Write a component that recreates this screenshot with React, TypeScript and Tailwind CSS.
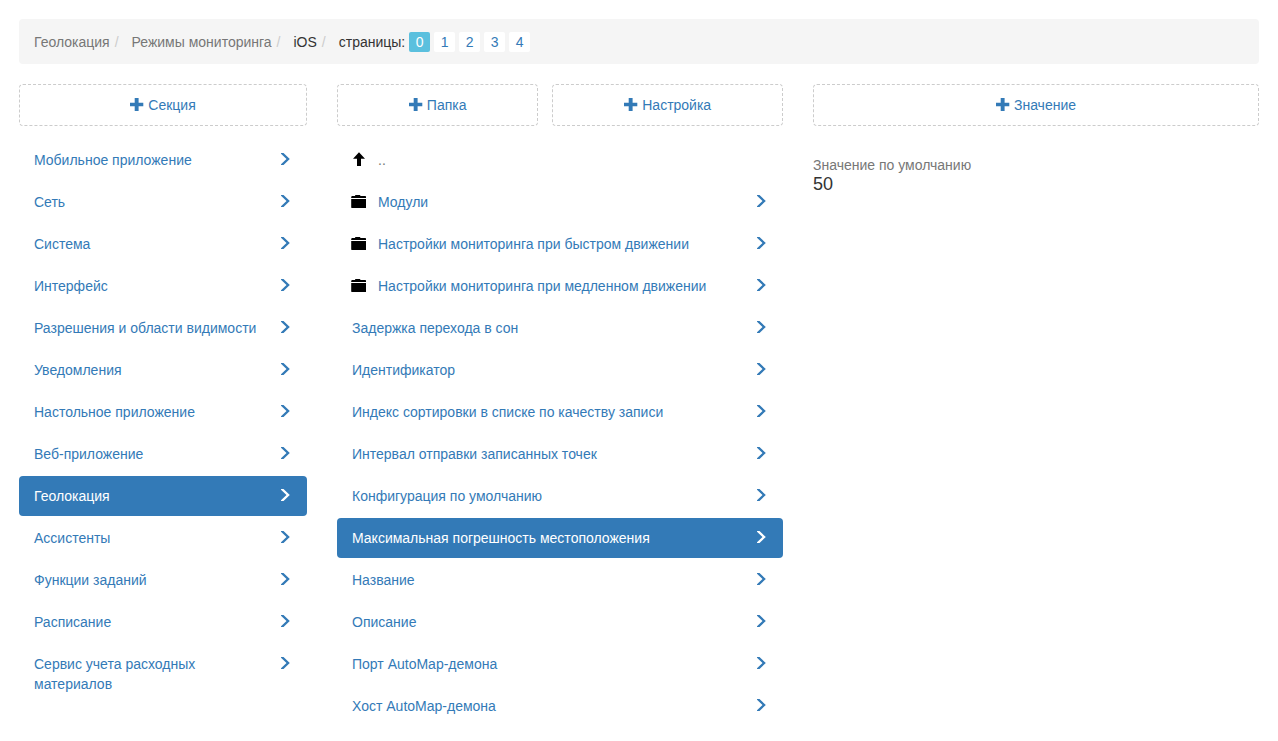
import React from "react";

type Kind = "up" | "folder" | "setting";

interface Entry {
  label: string;
  kind?: Kind;
  active?: boolean;
}

const sections: Entry[] = [
  { label: "Мобильное приложение" },
  { label: "Сеть" },
  { label: "Система" },
  { label: "Интерфейс" },
  { label: "Разрешения и области видимости" },
  { label: "Уведомления" },
  { label: "Настольное приложение" },
  { label: "Веб-приложение" },
  { label: "Геолокация", active: true },
  { label: "Ассистенты" },
  { label: "Функции заданий" },
  { label: "Расписание" },
  { label: "Сервис учета расходных материалов" },
];

const settings: Entry[] = [
  { label: "..", kind: "up" },
  { label: "Модули", kind: "folder" },
  { label: "Настройки мониторинга при быстром движении", kind: "folder" },
  { label: "Настройки мониторинга при медленном движении", kind: "folder" },
  { label: "Задержка перехода в сон" },
  { label: "Идентификатор" },
  { label: "Индекс сортировки в списке по качеству записи" },
  { label: "Интервал отправки записанных точек" },
  { label: "Конфигурация по умолчанию" },
  { label: "Максимальная погрешность местоположения", active: true },
  { label: "Название" },
  { label: "Описание" },
  { label: "Порт AutoMap-демона" },
  { label: "Хост AutoMap-демона" },
];

const pages = [0, 1, 2, 3, 4];

function PlusIcon() {
  return (
    <svg viewBox="0 0 14 14" className="size-3.5 shrink-0" fill="currentColor" aria-hidden="true">
      <path d="M4.7 0h3.9v4.7h4.7v3.6H8.6V13H4.7V8.300H0V4.700h4.700z" />
    </svg>
  );
}

function ChevronIcon() {
  return (
    <svg viewBox="0 0 14 14" className="mt-3 size-3.5 shrink-0" fill="currentColor" aria-hidden="true">
      <path d="M3 1h2.500L11.800 7 5.500 13H3v-0.700L8.500 7 3 1.700z" />
    </svg>
  );
}

function ArrowUpIcon() {
  return (
    <svg viewBox="0 0 14 14" className="mt-3 size-3.5 shrink-0 text-black" fill="currentColor" aria-hidden="true">
      <path d="M7 0.200l6 6.600H9v7.200H5V6.800H1z" />
    </svg>
  );
}

function FolderIcon() {
  return (
    <svg
      viewBox="0 0 14 14"
      className="mt-3 size-3.5 shrink-0 overflow-visible text-black"
      fill="currentColor"
      aria-hidden="true"
    >
      <path d="M-0.800 4V2.700L0 2H3L3.400 1H8L8.500 2H13.600L14 2.700V4z" />
      <path d="M-0.800 5H14V14H-0.300L-0.800 13.500z" />
    </svg>
  );
}

function AddButton({ label }: { label: string }) {
  return (
    <button
      type="button"
      className="flex flex-auto cursor-pointer items-center justify-center gap-1 rounded border border-dashed border-[#ccc] px-4 py-2.5 text-[#337ab7]"
    >
      <PlusIcon />
      {label}
    </button>
  );
}

function NavList({ items, label }: { items: Entry[]; label: string }) {
  return (
    <nav aria-label={label}>
      <ul className="flex flex-col gap-0.5">
        {items.map((item) => (
          <li key={item.label}>
            <a
              href="#"
              aria-current={item.active ? "true" : undefined}
              className={
                item.active
                  ? "flex items-start gap-3 rounded bg-[#337ab7] px-[15px] text-white"
                  : item.kind === "up"
                    ? "flex items-start gap-3 rounded px-[15px] text-[#777]"
                    : "flex items-start gap-3 rounded px-[15px] text-[#337ab7] hover:bg-[#eee]"
              }
            >
              {item.kind === "up" && <ArrowUpIcon />}
              {item.kind === "folder" && <FolderIcon />}
              <span className="flex-1 py-2.5">{item.label}</span>
              {item.kind !== "up" && <ChevronIcon />}
            </a>
          </li>
        ))}
      </ul>
    </nav>
  );
}

function Slash() {
  return (
    <span className="pr-[13px] pl-[5px] text-[#ccc]" aria-hidden="true">
      /
    </span>
  );
}

export default function App() {
  return (
    <div className="min-h-screen bg-white p-[19px] pb-0 font-['Liberation_Sans',Arial,sans-serif] text-[14px] leading-5 text-[#333]">
      <nav aria-label="Навигация" className="mb-5 rounded bg-[#f5f5f5] px-[15px] pt-[13px] pb-3">
        <ol className="flex flex-wrap items-center">
          <li>
            <a href="#" className="text-[#777]">
              Геолокация
            </a>
            <Slash />
          </li>
          <li>
            <a href="#" className="text-[#777]">
              Режимы мониторинга
            </a>
            <Slash />
          </li>
          <li>
            iOS
            <Slash />
          </li>
          <li className="flex items-center gap-1">
            <span>страницы:</span>
            {pages.map((page) => (
              <a
                key={page}
                href="#"
                className={
                  page === 0
                    ? "w-[21px] rounded-xs bg-[#5bc0de] text-center text-white"
                    : "w-[21px] rounded-xs bg-white text-center text-[#337ab7]"
                }
              >
                {page}
              </a>
            ))}
          </li>
        </ol>
      </nav>

      <main className="grid grid-cols-[288fr_446fr_446fr] gap-[30px]">
        <section className="flex flex-col gap-3.5">
          <div className="flex">
            <AddButton label="Секция" />
          </div>
          <NavList items={sections} label="Секции" />
        </section>

        <section className="flex flex-col gap-3.5">
          <div className="flex gap-3.5">
            <AddButton label="Папка" />
            <AddButton label="Настройка" />
          </div>
          <NavList items={settings} label="Настройки" />
        </section>

        <section>
          <div className="mb-[29px] flex">
            <AddButton label="Значение" />
          </div>
          <dl>
            <dt className="text-[#777]">Значение по умолчанию</dt>
            <dd className="text-lg leading-[18px]">50</dd>
          </dl>
        </section>
      </main>
    </div>
  );
}
